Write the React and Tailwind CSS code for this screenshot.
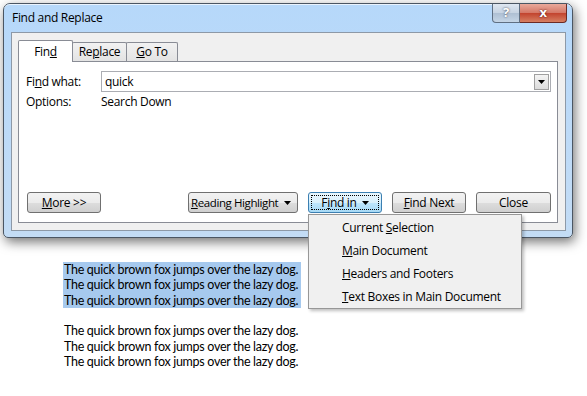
import { useState } from 'react';

const ui = { fontFamily: '"Open Sans", "Noto Sans", sans-serif' };
const doc = { fontFamily: 'Lato, "Open Sans", sans-serif' };

const WinButton = ({ children, className = '', active = false }) => (
  <button
    className={`h-[21px] rounded-[3px] border text-[12px] leading-none text-black flex items-center justify-center whitespace-nowrap ${
      active
        ? 'border-[#3c7fb1] bg-[linear-gradient(#e8f6fd_0%,#d9f0fc_50%,#bee6fd_51%,#a7d9f5_100%)] p-[2px]'
        : 'border-[#707070] bg-[linear-gradient(#f2f2f2_0%,#ebebeb_50%,#dddddd_51%,#cfcfcf_100%)]'
    } ${className}`}
  >
    {children}
  </button>
);

const Arrow = ({ className = '' }) => (
  <svg width="7" height="4" viewBox="0 0 7 4" className={className}>
    <path d="M0 0h7L3.5 4z" fill="#000" />
  </svg>
);

const menuItems = [
  ['Current ', 'S', 'election'],
  ['', 'M', 'ain Document'],
  ['', 'H', 'eaders and Footers'],
  ['', 'T', 'ext Boxes in Main Document'],
];

const line = 'The quick brown fox jumps over the lazy dog.';

const App = () => {
  const [query] = useState('quick');

  return (
    <div className="relative w-[587px] h-[396px] bg-white overflow-hidden tracking-[-0.3px]" style={ui}>
      {/* dialog window */}
      <div className="ml-[3px] mt-[3px] w-[570px] h-[235px] rounded-t-[7px] rounded-b-[5px] border border-[#4b5663] bg-[linear-gradient(#b6d8fa,#c3dcf5)] shadow-[2px_4px_12px_rgba(0,0,0,0.55)] flex flex-col">
        {/* title bar */}
        <div className="h-[28px] flex items-start justify-between border-t border-white/70 rounded-t-[6px]">
          <span className="pl-[8px] pt-[5px] text-[12px] leading-[16px] text-black">Find and Replace</span>
          <div className="flex mr-[5px] -mt-px">
            <div className="w-[28px] h-[19px] rounded-bl-[4px] border border-[#5f6f82] border-t-0 bg-[linear-gradient(#dfe7f1,#c6d3e2_50%,#aebfd3_51%,#c5d5e6)] flex items-center justify-center text-[13px] font-bold text-white [text-shadow:0_0_2px_#334]">
              ?
            </div>
            <div className="w-[47px] h-[19px] rounded-br-[4px] border border-l-0 border-t-0 border-[#6b2a24] bg-[linear-gradient(#e9a99b,#d47766_50%,#c2432e_51%,#d67f62)] flex items-center justify-center text-[13px] font-bold text-white [text-shadow:0_0_2px_#400]">
              x
            </div>
          </div>
        </div>

        {/* client area */}
        <div className="ml-[7px] w-[555px] h-[199px] border border-[#8d99a7] bg-[#f0f0f0] pl-[6px] pt-[7px]">
          {/* tabs */}
          <div className="flex items-end h-[21px] text-[12px]">
            <div className="relative z-10 w-[55px] h-[22px] -mb-px bg-white border border-b-0 border-[#898c95] rounded-t-[2px] flex items-center justify-center">
              <span>
                Fin<u>d</u>
              </span>
            </div>
            <div className="-ml-px w-[55px] h-[19px] border border-b-0 border-[#898c95] rounded-t-[2px] bg-[linear-gradient(#f2f2f2,#e3e3e3)] flex items-center justify-center">
              <span>
                Re<u>p</u>lace
              </span>
            </div>
            <div className="-ml-px w-[52px] h-[19px] border border-b-0 border-[#898c95] rounded-t-[2px] bg-[linear-gradient(#f2f2f2,#e3e3e3)] flex items-center justify-center">
              <span>
                <u>G</u>o To
              </span>
            </div>
          </div>

          {/* tab panel */}
          <div className="w-[540px] h-[162px] bg-white border border-[#898c95] flex flex-col pl-[7px] pr-[6px] pt-[9px] pb-[9px] text-[12px] text-black">
            <div className="flex items-center">
              <span className="w-[75px]">
                Fi<u>n</u>d what:
              </span>
              <div className="flex-1 h-[21px] border border-[#abadb3] flex items-center pl-[3px] pr-[1px]">
                <span className="flex-1">{query}</span>
                <div className="w-[15px] h-[16px] border border-[#a0a0a0] bg-[linear-gradient(#f4f4f4,#dcdcdc)] flex items-center justify-center">
                  <Arrow />
                </div>
              </div>
            </div>
            <div className="flex h-[16px] mt-[2px] items-center">
              <span className="w-[75px]">Options:</span>
              <span>Search Down</span>
            </div>

            <div className="mt-auto flex items-center">
              <WinButton className="ml-px w-[74px]">
                <span>
                  <u>M</u>ore &gt;&gt;
                </span>
              </WinButton>
              <div className="flex-1" />
              <WinButton className="w-[110px] pl-[2px] pr-[6px]">
                <span className="flex-1 text-left text-[11.5px] tracking-[-0.4px]">
                  <u>R</u>eading Highlight
                </span>
                <Arrow />
              </WinButton>
              <WinButton active className="ml-[10px] w-[74px]">
                <span className="w-full h-full border border-dotted border-black flex items-center justify-center gap-[5px]">
                  <span>
                    F<u>i</u>nd in
                  </span>
                  <Arrow />
                </span>
              </WinButton>
              <WinButton className="ml-[10px] w-[74px]">
                <span>
                  <u>F</u>ind Next
                </span>
              </WinButton>
              <WinButton className="ml-[10px] w-[75px]">Close</WinButton>
            </div>
          </div>
        </div>
      </div>

      {/* document text */}
      <div
        className="pl-[63px] pt-[24px] text-[12.5px] leading-[15.33px] tracking-[-0.3px] text-black whitespace-nowrap"
        style={doc}
      >
        <div className="w-[238px] bg-[#a6c9ee] pl-px">
          <div>{line}</div>
          <div>{line}</div>
          <div>{line}</div>
        </div>
        <div className="pl-px">
          <div className="h-[15.33px]" />
          <div>{line}</div>
          <div>{line}</div>
          <div>{line}</div>
        </div>
      </div>

      {/* Find in dropdown menu */}
      <div className="absolute left-[308px] top-[214px] w-[214px] h-[95px] border border-[#979797] bg-[#f0f0f0] shadow-[2px_2px_3px_rgba(0,0,0,0.25)] py-px text-[12px] text-black whitespace-pre">
        {menuItems.map(([pre, key, post]) => (
          <div key={post} className="h-[23px] leading-[23px] pl-[33px]">
            {pre}
            <u>{key}</u>
            {post}
          </div>
        ))}
      </div>
    </div>
  );
};

export default App;
